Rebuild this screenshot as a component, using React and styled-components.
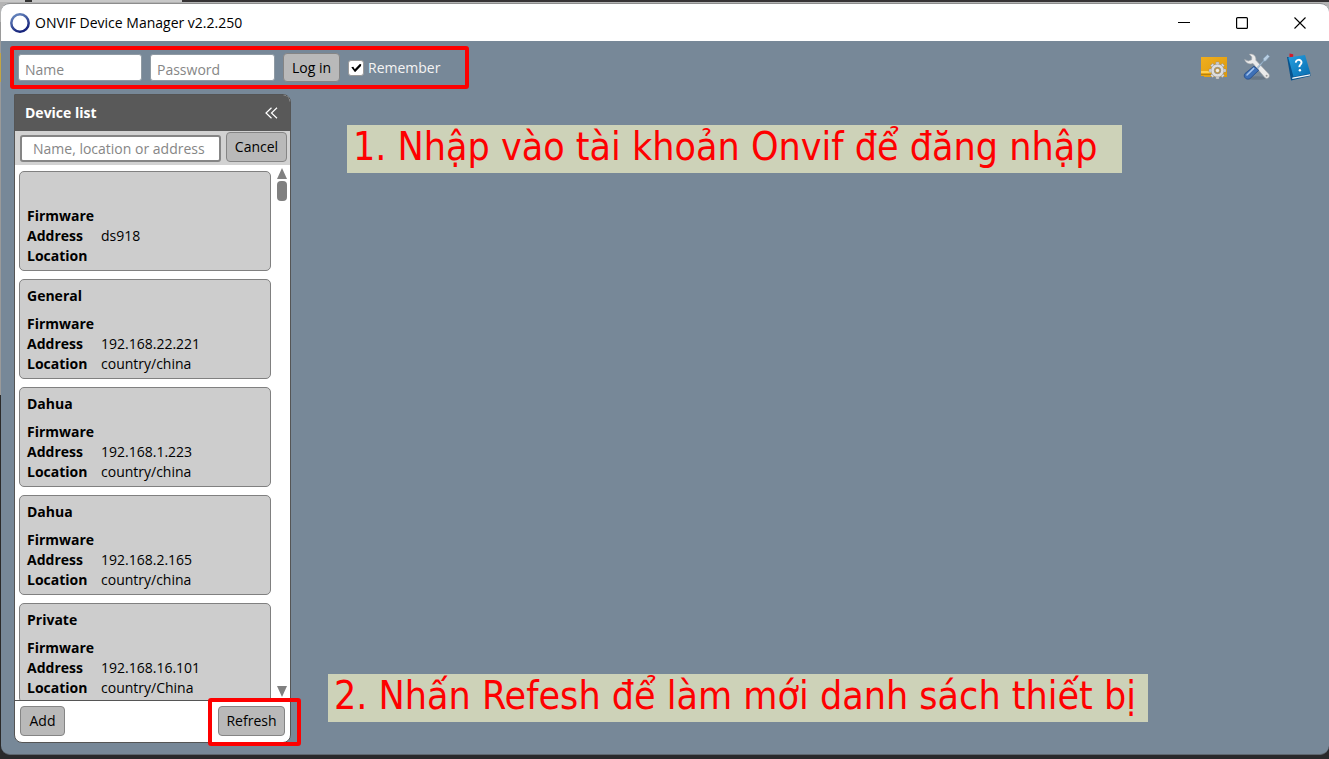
import React from "react";
import styled, { createGlobalStyle } from "styled-components";

const GlobalStyle = createGlobalStyle`
  *, *::before, *::after { box-sizing: border-box; }
  body {
    margin: 0;
    font-family: "Open Sans", "Noto Sans", sans-serif;
    font-size: 14px;
    line-height: 20px;
    color: #000;
  }
  button, input { font: inherit; }
`;

const Desktop = styled.div`
  height: 100vh;
  min-height: 480px;
  display: flex;
  padding: 3px 0 4px 1px;
  background:
    linear-gradient(90deg, #c8c8c8 25px, #333 25px 32px, #c8c8c8 32px 182px, #363334 182px) 0 0 / 100% 2px no-repeat,
    linear-gradient(#b4b4b4, #b4b4b4) 0 2px / 100% 20px no-repeat,
    linear-gradient(#9a9a9a 53px, #c3a544 53px 82px, #9a9a9a 82px 395px, #2a2a2a 395px) 0 0 / 1px 100% no-repeat,
    #29292b;
`;

const AppWindow = styled.div`
  flex: 1;
  min-width: 0;
  display: flex;
  flex-direction: column;
  border-radius: 9px;
  border-top: 1px solid #8d8d8d;
  border-bottom: 1px solid #5d666e;
  background: #778898;
  overflow: hidden;
`;

const TitleBar = styled.header`
  flex: none;
  height: 37px;
  display: flex;
  align-items: center;
  gap: 5px;
  padding-left: 9px;
  background: #fff;
`;

const Title = styled.h1`
  flex: 1;
  margin: 0;
  font-size: 14px;
  font-weight: 400;
  white-space: nowrap;
`;

const CaptionButtons = styled.div`
  display: flex;
`;

const CaptionButton = styled.button`
  width: 58px;
  height: 37px;
  display: grid;
  place-items: center;
  padding: 0;
  border: 0;
  background: transparent;
`;

const Toolbar = styled.div`
  flex: none;
  display: flex;
  justify-content: space-between;
  align-items: flex-start;
  padding: 5px 16px 5px 9px;
`;

const LoginForm = styled.form`
  width: 459px;
  height: 43px;
  display: flex;
  align-items: center;
  gap: 8px;
  padding: 0 4px;
  border: 4px solid #fe0000;
  border-radius: 3px;
`;

const TextField = styled.input`
  width: ${(p) => p.$width || "100%"};
  height: ${(p) => p.$height || 27}px;
  min-width: 0;
  padding: ${(p) => p.$padding || "4px 6px 0"};
  border: ${(p) => p.$line || 1}px solid ${(p) => p.$border || "#8f9aa3"};
  border-radius: 3px;
  background: #fff;
  outline: 0;
  &::placeholder { color: #868686; opacity: 1; }
`;

const Button = styled.button`
  flex: none;
  height: ${(p) => p.$height || 30}px;
  min-width: ${(p) => p.$width}px;
  padding: 0 4px;
  border: 1px solid #858585;
  border-radius: 4px;
  background: #b9b9b9;
  color: #000;
  white-space: nowrap;
`;

const Remember = styled.label`
  display: flex;
  align-items: center;
  gap: 4px;
  color: #f4f4f4;
`;

const Tick = styled.input`
  appearance: none;
  width: 16px;
  height: 16px;
  margin: 0;
  border: 1px solid #9b9b9b;
  border-radius: 3px;
  background: #fff;
  &:checked {
    background: #fff url("data:image/svg+xml,%3Csvg xmlns='http://www.w3.org/2000/svg' viewBox='0 0 14 14'%3E%3Cpath d='M2.3 6.3 L4.3 5.7 L5.8 8.2 L10.8 3 L12.2 3.2 L12 5 L6 11.2 Z'/%3E%3C/svg%3E") center / 14px 14px;
  }
`;

const Tools = styled.nav`
  display: flex;
  gap: 14px;
  padding-top: 6px;
`;

const ToolButton = styled.button`
  width: 28px;
  height: 30px;
  padding: 0;
  border: 0;
  background: transparent;
  svg { display: block; }
`;

const Body = styled.div`
  flex: 1;
  min-height: 0;
  display: flex;
  padding: 0 9px 11px 13px;
`;

const Panel = styled.aside`
  flex: none;
  width: 277px;
  display: flex;
  flex-direction: column;
  border: 1px solid #555;
  border-radius: 0 8px 8px 8px;
  background: #fff;
`;

const PanelHeader = styled.div`
  flex: none;
  height: 36px;
  display: flex;
  align-items: center;
  justify-content: space-between;
  padding: 0 12px 0 10px;
  border-radius: 0 7px 0 0;
  background: #595959;
  color: #fff;
`;

const PanelTitle = styled.h2`
  margin: 0;
  font-size: 14px;
  font-weight: 700;
`;

const CollapseButton = styled.button`
  padding: 0;
  border: 0;
  background: transparent;
  svg { display: block; }
`;

const SearchRow = styled.div`
  flex: none;
  height: 34px;
  display: flex;
  align-items: flex-end;
  gap: 5px;
  padding: 0 3px 3px 5px;
  background: #d2d2d2;
`;

const ListArea = styled.div`
  flex: 1;
  min-height: 0;
  display: flex;
  justify-content: space-between;
  padding: 0 3px 0 4px;
`;

const Cards = styled.ul`
  width: 252px;
  margin: 0;
  padding: 6px 0 0;
  display: flex;
  flex-direction: column;
  gap: 8px;
  overflow: hidden;
  list-style: none;
`;

const Card = styled.li`
  flex: none;
  height: 100px;
  padding: 6px 7px;
  border: 1px solid #808080;
  border-radius: 5px;
  background: #cdcdcd;
`;

const DeviceName = styled.h3`
  height: 20px;
  margin: 0 0 8px;
  font-size: 14px;
  font-weight: 700;
`;

const Details = styled.dl`
  display: grid;
  grid-template-columns: 74px 1fr;
  grid-auto-rows: 20px;
  margin: 0;
  dt { font-weight: 700; }
  dd { margin: 0; }
`;

const ScrollTrack = styled.div`
  width: 10px;
  display: flex;
  flex-direction: column;
  gap: 2px;
  padding: 3px 0;
`;

const ScrollArrow = styled.span`
  width: 10px;
  height: 11px;
  background: #808080;
  clip-path: ${(p) => (p.$down ? "polygon(0 0, 100% 0, 50% 100%)" : "polygon(50% 0, 100% 100%, 0 100%)")};
  margin-top: ${(p) => (p.$down ? "auto" : "0")};
`;

const ScrollThumb = styled.span`
  height: 20px;
  border-radius: 4px;
  background: #808080;
`;

const PanelFooter = styled.div`
  flex: none;
  height: 42px;
  display: flex;
  align-items: center;
  justify-content: space-between;
  padding: 0 5px 1px;
  border-top: 1px solid #555;
`;

const RefreshSlot = styled.div`
  position: relative;
  &::after {
    content: "";
    position: absolute;
    inset: -8px -16px -10px -10px;
    border: 4px solid #fe0000;
    border-radius: 3px;
    pointer-events: none;
  }
`;

const Workspace = styled.main`
  flex: 1;
  min-width: 0;
  display: flex;
  flex-direction: column;
  justify-content: space-between;
  align-items: flex-start;
  padding: 31px 0 21px 37px;
`;

const Note = styled.p`
  margin: 0 0 0 ${(p) => p.$indent || 0}px;
  width: ${(p) => p.$width}px;
  height: 48px;
  padding-left: 6px;
  background: #cdd2b8;
  color: #fe0000;
  font-family: "DejaVu Sans Condensed", "DejaVu Sans", sans-serif;
  font-size: 39px;
  line-height: 44px;
  white-space: nowrap;
`;

const LogoIcon = () => (
  <svg width="20" height="20" viewBox="0 0 20 20">
    <defs>
      <linearGradient id="ring" x1="0" y1="0" x2="0.5" y2="1">
        <stop offset="0" stopColor="#6d8fc4" />
        <stop offset="1" stopColor="#17247c" />
      </linearGradient>
    </defs>
    <circle cx="10" cy="10" r="8.7" fill="none" stroke="url(#ring)" strokeWidth="2.5" />
  </svg>
);

const teeth = [0, 45, 90, 135, 180, 225, 270, 315];

const EventsIcon = () => (
  <svg width="28" height="30" viewBox="0 0 28 30">
    <defs>
      <linearGradient id="folder" x1="0" y1="0" x2="1" y2="1">
        <stop offset="0" stopColor="#f0ae1e" />
        <stop offset="1" stopColor="#dd9a0c" />
      </linearGradient>
    </defs>
    <path d="M0 5H26V25H3V24H0Z" fill="url(#folder)" />
    <path d="M0 19H10V21H0Z" fill="#ffcf52" />
    <path d="M0 22H11V23H0Z" fill="#b9830b" />
    <g transform="translate(16.5 18.5)">
      {teeth.map((a) => (
        <rect key={a} x="-1.6" y="-8.5" width="3.2" height="4" rx="0.6" fill="#d9d9d9" stroke="#8b8b8b" strokeWidth="0.5" transform={`rotate(${a})`} />
      ))}
      <circle r="4.8" fill="none" stroke="#8d8d8d" strokeWidth="3.8" />
      <circle r="4.8" fill="none" stroke="#dedede" strokeWidth="3" />
      <circle r="3.2" fill="#c39c4a" stroke="#8d8d8d" strokeWidth="0.7" />
      <circle r="1.7" fill="#ececec" />
    </g>
  </svg>
);

const SettingsIcon = () => (
  <svg width="28" height="30" viewBox="0 0 28 30">
    <ellipse cx="14" cy="26" rx="11" ry="1.8" fill="#5d6b78" opacity="0.6" />
    <path d="M6.2 2.3 C10 1.2 13.4 4 12.9 8.2 L26 22.3 C27.3 25.6 24.4 27.4 22 25.8 L10 11.5 C6.4 12.8 2.6 11 1.6 7.4 L5.2 9 L8.6 7.8 L8.8 4.9 Z" fill="#ebebeb" stroke="#a2a6aa" strokeWidth="0.7" />
    <circle cx="23.6" cy="23.8" r="1" fill="#9a9a9a" />
    <path d="M14 15.5 L20.5 8.7 L20.3 6.5 L24.6 2.6 L26.6 4.5 L22.6 9.1 L20.8 9.2 L15 16.5 Z" fill="#b8cee2" stroke="#7e9ab4" strokeWidth="0.6" />
    <path d="M11 14.2 L15.7 18.3 L7.5 26.2 C4.4 29 -0.8 25.1 2 21.5 Z" fill="#3e70b7" stroke="#254b86" strokeWidth="0.8" />
    <path d="M10.7 16.4 L4 23" stroke="#a4c4ed" strokeWidth="1.5" strokeLinecap="round" />
  </svg>
);

const HelpIcon = () => (
  <svg width="28" height="30" viewBox="0 0 28 30">
    <defs>
      <linearGradient id="book" x1="0" y1="0" x2="1" y2="1">
        <stop offset="0" stopColor="#27a0df" />
        <stop offset="1" stopColor="#086cb0" />
      </linearGradient>
    </defs>
    <path d="M4.5 1.5 L8.2 2.3 L8.2 5.5 L4.5 5.5 Z" fill="#d61b28" />
    <path d="M2 5 L4 5 L9.2 24 L25 21 L25.5 24 L6 28.5 Z" fill="#07528c" />
    <path d="M3.2 5.5 L20 3.1 L25.5 21.5 L8.5 24.7 Z" fill="url(#book)" />
    <path d="M7.5 25.5 L25 22.2 L25 23.5 L7.2 27.1 Z" fill="#f4f7fa" />
    <path d="M10.9 10.6 C10.6 7.2 16.4 6.8 16.5 10.4 C16.6 12.8 14 12.6 14.4 15.2" fill="none" stroke="#fff" strokeWidth="2" />
    <circle cx="14.9" cy="18.2" r="1.2" fill="#fff" />
  </svg>
);

const devices = [
  { name: "", address: "ds918", location: "" },
  { name: "General", address: "192.168.22.221", location: "country/china" },
  { name: "Dahua", address: "192.168.1.223", location: "country/china" },
  { name: "Dahua", address: "192.168.2.165", location: "country/china" },
  { name: "Private", address: "192.168.16.101", location: "country/China" },
];

const DeviceCard = ({ device }) => (
  <Card>
    <DeviceName>{device.name}</DeviceName>
    <Details>
      <dt>Firmware</dt>
      <dd />
      <dt>Address</dt>
      <dd>{device.address}</dd>
      <dt>Location</dt>
      <dd>{device.location}</dd>
    </Details>
  </Card>
);

export default function App() {
  return (
    <>
      <GlobalStyle />
      <Desktop>
        <AppWindow>
          <TitleBar>
            <LogoIcon />
            <Title>ONVIF Device Manager v2.2.250</Title>
            <CaptionButtons>
              <CaptionButton aria-label="Minimize">
                <svg width="12" height="12"><path d="M0 5.5H12" stroke="#000" /></svg>
              </CaptionButton>
              <CaptionButton aria-label="Maximize">
                <svg width="12" height="12"><rect x="0.6" y="0.6" width="10.8" height="10.8" rx="1" fill="none" stroke="#000" strokeWidth="1.2" /></svg>
              </CaptionButton>
              <CaptionButton aria-label="Close">
                <svg width="12" height="12"><path d="M0.5 0.5L11.5 11.5M11.5 0.5L0.5 11.5" stroke="#000" strokeWidth="1.1" /></svg>
              </CaptionButton>
            </CaptionButtons>
          </TitleBar>
          <Toolbar>
            <LoginForm onSubmit={(e) => e.preventDefault()}>
              <TextField $width="124px" placeholder="Name" aria-label="Name" />
              <TextField $width="125px" type="password" placeholder="Password" aria-label="Password" />
              <Button $width={57} $height={29}>Log in</Button>
              <Remember>
                <Tick type="checkbox" defaultChecked />
                Remember
              </Remember>
            </LoginForm>
            <Tools aria-label="Tools">
              <ToolButton aria-label="Events"><EventsIcon /></ToolButton>
              <ToolButton aria-label="Settings"><SettingsIcon /></ToolButton>
              <ToolButton aria-label="Help"><HelpIcon /></ToolButton>
            </Tools>
          </Toolbar>
          <Body>
            <Panel>
              <PanelHeader>
                <PanelTitle>Device list</PanelTitle>
                <CollapseButton aria-label="Collapse">
                  <svg width="13" height="12"><path d="M6.5 0.8L1 6L6.5 11.2M12 0.8L6.5 6L12 11.2" fill="none" stroke="#fff" strokeWidth="1.2" /></svg>
                </CollapseButton>
              </PanelHeader>
              <SearchRow>
                <TextField $height={27} $line={2} $border="#858585" $padding="0 11px" placeholder="Name, location or address" aria-label="Search devices" />
                <Button $width={61}>Cancel</Button>
              </SearchRow>
              <ListArea>
                <Cards>
                  {devices.map((device) => (
                    <DeviceCard key={device.address} device={device} />
                  ))}
                </Cards>
                <ScrollTrack>
                  <ScrollArrow />
                  <ScrollThumb />
                  <ScrollArrow $down />
                </ScrollTrack>
              </ListArea>
              <PanelFooter>
                <Button $width={45}>Add</Button>
                <RefreshSlot>
                  <Button $width={67}>Refresh</Button>
                </RefreshSlot>
              </PanelFooter>
            </Panel>
            <Workspace>
              <Note $indent={19} $width={775}>1. Nhập vào tài khoản Onvif để đăng nhập</Note>
              <Note $width={820}>2. Nhấn Refesh để làm mới danh sách thiết bị</Note>
            </Workspace>
          </Body>
        </AppWindow>
      </Desktop>
    </>
  );
}
